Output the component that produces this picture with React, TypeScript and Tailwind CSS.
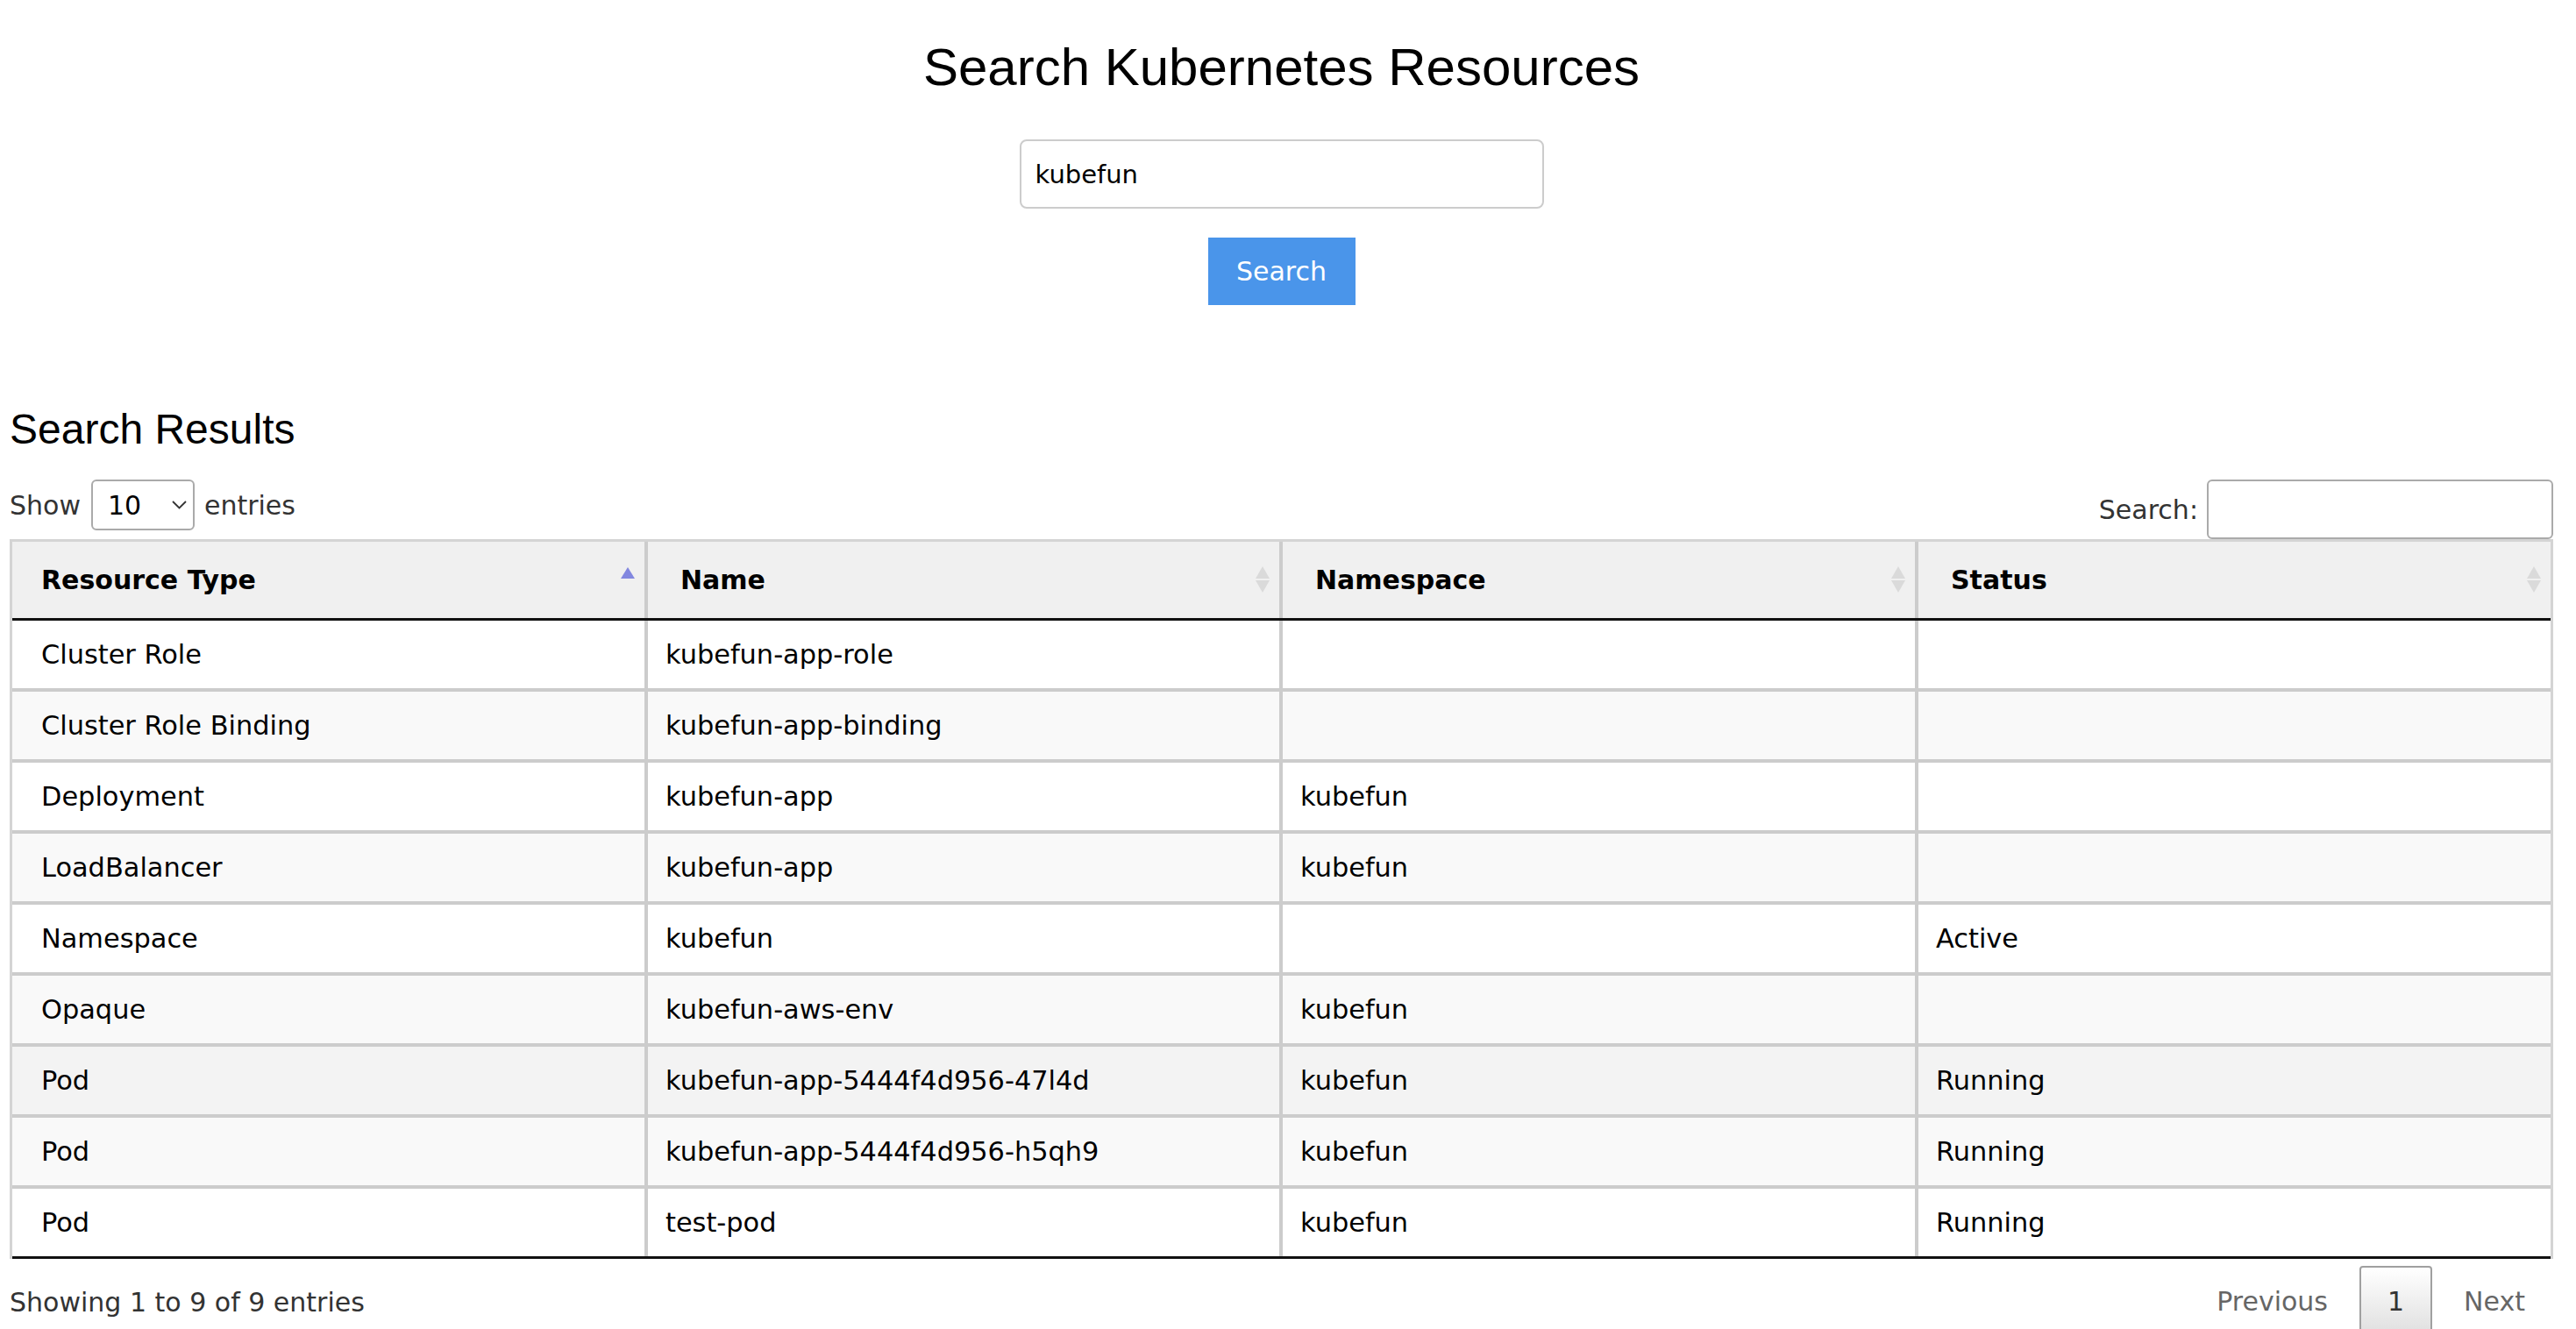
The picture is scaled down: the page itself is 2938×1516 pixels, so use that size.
import React from "react";

const rows: [string, string, string, string][] = [
  ["Cluster Role", "kubefun-app-role", "", ""],
  ["Cluster Role Binding", "kubefun-app-binding", "", ""],
  ["Deployment", "kubefun-app", "kubefun", ""],
  ["LoadBalancer", "kubefun-app", "kubefun", ""],
  ["Namespace", "kubefun", "", "Active"],
  ["Opaque", "kubefun-aws-env", "kubefun", ""],
  ["Pod", "kubefun-app-5444f4d956-47l4d", "kubefun", "Running"],
  ["Pod", "kubefun-app-5444f4d956-h5qh9", "kubefun", "Running"],
  ["Pod", "test-pod", "kubefun", "Running"],
];

const rowBg = ["bg-white", "bg-[#f9f9f9]", "bg-white", "bg-[#f9f9f9]", "bg-white", "bg-[#f9f9f9]", "bg-[#f3f3f3]", "bg-[#f9f9f9]", "bg-white"];

function SortBoth() {
  return (
    <svg className="absolute right-[11px] top-[28px]" width="16" height="30" viewBox="0 0 16 30">
      <polygon points="8,0 16,14 0,14" fill="#dadada" />
      <polygon points="0,16 16,16 8,30" fill="#dadada" />
    </svg>
  );
}

function SortAsc() {
  return (
    <svg className="absolute right-[11px] top-[29px]" width="16" height="13" viewBox="0 0 16 13">
      <polygon points="8,0 16,13 0,13" fill="#8287df" />
    </svg>
  );
}

export default function App() {
  const headers = ["Resource Type", "Name", "Namespace", "Status"];
  return (
    <div className="min-h-screen bg-white pl-[11px] pr-[26px] text-black" style={{ fontFamily: '"DejaVu Sans", Verdana, sans-serif' }}>
      <h1
        className="mt-[47px] text-center text-[60px] leading-[60px] font-normal"
        style={{ fontFamily: '"Liberation Sans", Arial, sans-serif' }}
      >
        Search Kubernetes Resources
      </h1>
      <div className="mt-[52px] flex justify-center">
        <div className="flex h-[79px] w-[598px] items-center rounded-[8px] border-2 border-[#cccccc] pl-[16px] pt-[2px] text-[29px]">
          kubefun
        </div>
      </div>
      <div className="mt-[33px] flex justify-center">
        <button className="flex h-[77px] w-[168px] items-center justify-center bg-[#4a95ea] text-[30px] text-white">
          Search
        </button>
      </div>
      <h2
        className="mt-[118px] text-[48px] leading-[48px] font-normal"
        style={{ fontFamily: '"Liberation Sans", Arial, sans-serif' }}
      >
        Search Results
      </h2>
      <div className="mt-[33px] flex items-start justify-between text-[30px] text-[#333333]">
        <div className="flex h-[58px] items-center">
          <span>Show</span>
          <div className="ml-[12px] mr-[11px] flex h-[58px] w-[118px] items-center justify-between rounded-[6px] border-2 border-[#aaaaaa] pl-[17px] pr-[7px] text-black">
            <span>10</span>
            <svg width="17" height="10" viewBox="0 0 17 10">
              <polyline points="1,1 8.5,8.5 16,1" fill="none" stroke="#333" strokeWidth="1.8" />
            </svg>
          </div>
          <span>entries</span>
        </div>
        <div className="flex items-center">
          <span>Search:</span>
          <div className="ml-[10px] h-[68px] w-[395px] rounded-[6px] border-2 border-[#aaaaaa]" />
        </div>
      </div>
      <div className="border-x-[3px] border-t-[3px] border-[#d4d4d4] text-[30px]">
        <div className="grid grid-cols-[721px_724px_725px_1fr] border-b-[3px] border-[#111111] bg-[#f0f0f0] font-bold">
          {headers.map((h, i) => (
            <div
              key={h}
              className={`relative flex h-[87px] items-center ${i === 0 ? "pl-[33px]" : "border-l-4 border-[#cccccc] pl-[37px]"}`}
            >
              {h}
              {i === 0 ? <SortAsc /> : <SortBoth />}
            </div>
          ))}
        </div>
        {rows.map((r, ri) => (
          <div
            key={ri}
            className={`grid grid-cols-[721px_724px_725px_1fr] ${rowBg[ri]} ${ri === rows.length - 1 ? "border-b-[3px] border-[#111111]" : "border-b-4 border-[#cccccc]"}`}
          >
            {r.map((c, ci) => (
              <div
                key={ci}
                className={`flex h-[77px] items-center text-[30.4px] ${ci === 0 ? "pl-[33px]" : "border-l-4 border-[#cccccc] pl-[20px]"}`}
              >
                {c}
              </div>
            ))}
          </div>
        ))}
      </div>
      <div className="flex items-start justify-between text-[30px]">
        <div className="pt-[27px] text-[#333333]">Showing 1 to 9 of 9 entries</div>
        <div className="mt-[8px] flex items-start text-[#666666]">
          <div className="border-2 border-transparent px-[30px] pt-[16px] pb-[24px]">Previous</div>
          <div className="ml-[4px] rounded-[4px] border-2 border-[#a0a0a0] bg-gradient-to-b from-white to-[#dcdcdc] px-[30px] pt-[16px] pb-[24px] text-[#333333]">
            1
          </div>
          <div className="ml-[4px] border-2 border-transparent px-[30px] pt-[16px] pb-[24px]">Next</div>
        </div>
      </div>
    </div>
  );
}
